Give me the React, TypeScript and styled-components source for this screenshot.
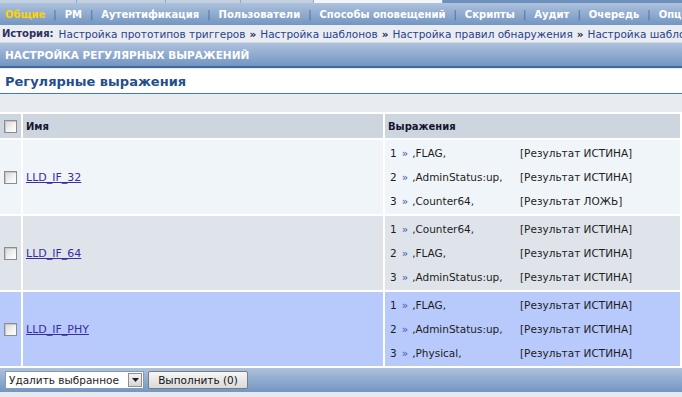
import React from "react";
import styled, { createGlobalStyle } from "styled-components";

const GlobalStyle = createGlobalStyle`
    body {
        margin: 0;
        background: #e6eaef;
        font-family: "DejaVu Sans", Verdana, sans-serif;
        font-size: 10px;
        color: #1d1d1d;
        overflow: hidden;
    }
`;

const blueBar = "linear-gradient(to bottom, #adc2dc 0%, #93add0 45%, #7396c2 100%)";

const Page = styled.div`
    width: 682px;
    height: 397px;
    overflow: hidden;
`;

const MainTabs = styled.div`
    height: 3px;
    display: flex;
    background: #6c8fbc;
`;

const MainTab = styled.div<{ $w: number; $active?: boolean }>`
    width: ${(p) => p.$w}px;
    background: ${(p) => (p.$active ? "#f2f5f9" : "#c3d0df")};
    border-right: 1px solid #8ea8c9;
`;

const SubMenu = styled.div`
    height: 22px;
    display: flex;
    align-items: center;
    padding-left: 5px;
    background: ${blueBar};
    white-space: nowrap;
    overflow: hidden;
`;

const MenuItem = styled.span<{ $active?: boolean }>`
    font-weight: bold;
    color: ${(p) => (p.$active ? "#ffd200" : "#ffffff")};
`;

const MenuSep = styled.span`
    color: #4d6c98;
    padding: 0 8px;
`;

const History = styled.div`
    height: 17px;
    display: flex;
    align-items: center;
    padding-left: 2px;
    background: #e9edf2;
    border-bottom: 1px solid #d3dae3;
    white-space: nowrap;
    overflow: hidden;
    font-size: 10.5px;
    color: #2a3d80;
`;

const HistoryLabel = styled.span`
    font-weight: bold;
    font-size: 10px;
    color: #303060;
    margin-right: 5px;
`;

const Crumb = styled.span`
    color: #2b3f8c;
`;

const CrumbSep = styled.span`
    font-weight: bold;
    color: #1a2050;
    padding: 0 4px;
`;

const PageHeader = styled.div`
    height: 23px;
    display: flex;
    align-items: center;
    padding-left: 5px;
    background: ${blueBar};
    border-bottom: 2px solid #3d6aa3;
    color: #ffffff;
    font-weight: bold;
    font-size: 10.5px;
`;

const TitleBlock = styled.div`
    margin-top: 1px;
    height: 24px;
    display: flex;
    align-items: center;
    padding-left: 5px;
    background: #ffffff;
    border-bottom: 1px solid #3f7fbf;
    color: #1f4f8e;
    font-weight: bold;
    font-size: 13px;
`;

const Band = styled.div`
    height: 18px;
    background: #e8ecf0;
`;

const Table = styled.table`
    width: 100%;
    border-collapse: separate;
    border-spacing: 0;
    background: #ffffff;
    table-layout: fixed;
    padding-top: 2px;
`;

const Th = styled.th<{ $w?: number }>`
    box-sizing: border-box;
    width: ${(p) => (p.$w ? `${p.$w}px` : "auto")};
    height: 26px;
    padding: 0 0 0 3px;
    text-align: left;
    background: #cdd5df;
    font-size: 10px;
    font-weight: bold;
    color: #151530;
    border-right: 2px solid #ffffff;
    border-bottom: 2px solid #ffffff;
`;

const rowBg = ["#f0f5f9", "#dfe4eb", "#b8c9fb"];

const Td = styled.td<{ $row: number; $pad?: number }>`
    box-sizing: border-box;
    height: 76px;
    padding: 0 0 0 ${(p) => p.$pad ?? 3}px;
    background: ${(p) => rowBg[p.$row]};
    border-right: 2px solid #ffffff;
    border-bottom: 2px solid #ffffff;
    vertical-align: middle;
    font-size: 10.5px;
`;

const Check = styled.input.attrs({ type: "checkbox" })`
    appearance: none;
    display: block;
    margin: 0 0 0 1px;
    width: 13px;
    height: 13px;
    border: 1px solid #8c8c8c;
    background: linear-gradient(135deg, #d6d6d6 0%, #f3f3f3 60%, #ffffff 100%);
    box-shadow: inset 1px 1px 0 #c8c8c8;
`;

const NameLink = styled.a`
    color: #3b2ca0;
    font-size: 11px;
    text-decoration: underline;
`;

const ExprList = styled.div`
    display: grid;
    grid-template-rows: repeat(3, 24px);
`;

const ExprLine = styled.div`
    display: grid;
    grid-template-columns: 130px auto;
    align-items: center;
    white-space: nowrap;
`;

const Arrow = styled.span`
    color: #3c5cb0;
    padding: 0 4px 0 5px;
`;

const Footer = styled.div`
    height: 24px;
    display: flex;
    align-items: center;
    gap: 4px;
    padding-left: 5px;
    background: ${blueBar};
`;

const SelectBox = styled.div`
    box-sizing: border-box;
    width: 139px;
    height: 18px;
    display: flex;
    align-items: center;
    justify-content: space-between;
    background: #ffffff;
    border: 1px solid #7f9db9;
    padding-left: 3px;
    font-size: 10.5px;
`;

const SelectArrow = styled.span`
    width: 14px;
    height: 14px;
    margin-right: 1px;
    display: flex;
    align-items: center;
    justify-content: center;
    border: 1px solid #8f8f8f;
    box-sizing: border-box;
    background: linear-gradient(to bottom, #f4f4f4, #d6d6d6);
`;

const Button = styled.button`
    height: 18px;
    width: 100px;
    padding: 0;
    border: 1px solid #7b7b7b;
    border-radius: 2px;
    background: linear-gradient(to bottom, #f6f6f6, #dadada);
    font-family: "DejaVu Sans", Verdana, sans-serif;
    font-size: 10.5px;
    color: #111;
`;

const menu = ["Общие", "РМ", "Аутентификация", "Пользователи", "Способы оповещений", "Скрипты", "Аудит", "Очередь", "Опции"];
const crumbs = [
    "Настройка прототипов триггеров",
    "Настройка шаблонов",
    "Настройка правил обнаружения",
    "Настройка шаблонов",
];

const rows = [
    {
        name: "LLD_IF_32",
        exprs: [
            [",FLAG,", "[Результат ИСТИНА]"],
            [",AdminStatus:up,", "[Результат ИСТИНА]"],
            [",Counter64,", "[Результат ЛОЖЬ]"],
        ],
    },
    {
        name: "LLD_IF_64",
        exprs: [
            [",Counter64,", "[Результат ИСТИНА]"],
            [",FLAG,", "[Результат ИСТИНА]"],
            [",AdminStatus:up,", "[Результат ИСТИНА]"],
        ],
    },
    {
        name: "LLD_IF_PHY",
        exprs: [
            [",FLAG,", "[Результат ИСТИНА]"],
            [",AdminStatus:up,", "[Результат ИСТИНА]"],
            [",Physical,", "[Результат ИСТИНА]"],
        ],
    },
];

export default function App() {
    return (
        <Page>
            <GlobalStyle />
            <MainTabs>
                <MainTab $w={76} />
                <MainTab $w={88} />
                <MainTab $w={74} />
                <MainTab $w={72} />
                <MainTab $w={128} $active />
            </MainTabs>
            <SubMenu>
                {menu.map((m, i) => (
                    <React.Fragment key={m}>
                        {i > 0 && <MenuSep>|</MenuSep>}
                        <MenuItem $active={i === 0}>{m}</MenuItem>
                    </React.Fragment>
                ))}
            </SubMenu>
            <History>
                <HistoryLabel>История:</HistoryLabel>
                {crumbs.map((c, i) => (
                    <React.Fragment key={i}>
                        {i > 0 && <CrumbSep>»</CrumbSep>}
                        <Crumb>{c}</Crumb>
                    </React.Fragment>
                ))}
            </History>
            <PageHeader>НАСТРОЙКА РЕГУЛЯРНЫХ ВЫРАЖЕНИЙ</PageHeader>
            <TitleBlock>Регулярные выражения</TitleBlock>
            <Band />
            <Table>
                <thead>
                    <tr>
                        <Th $w={23}>
                            <Check />
                        </Th>
                        <Th $w={362}>Имя</Th>
                        <Th>Выражения</Th>
                    </tr>
                </thead>
                <tbody>
                    {rows.map((r, ri) => (
                        <tr key={r.name}>
                            <Td $row={ri}>
                                <Check />
                            </Td>
                            <Td $row={ri}>
                                <NameLink href="#">{r.name}</NameLink>
                            </Td>
                            <Td $row={ri} $pad={5}>
                                <ExprList>
                                    {r.exprs.map(([e, res], ei) => (
                                        <ExprLine key={ei}>
                                            <span>
                                                {ei + 1}
                                                <Arrow>»</Arrow>
                                                {e}
                                            </span>
                                            <span>{res}</span>
                                        </ExprLine>
                                    ))}
                                </ExprList>
                            </Td>
                        </tr>
                    ))}
                </tbody>
            </Table>
            <Footer>
                <SelectBox>
                    Удалить выбранное
                    <SelectArrow>
                        <svg width="7" height="4" viewBox="0 0 7 4">
                            <path d="M0 0h7L3.5 4z" fill="#222" />
                        </svg>
                    </SelectArrow>
                </SelectBox>
                <Button>Выполнить (0)</Button>
            </Footer>
        </Page>
    );
}
